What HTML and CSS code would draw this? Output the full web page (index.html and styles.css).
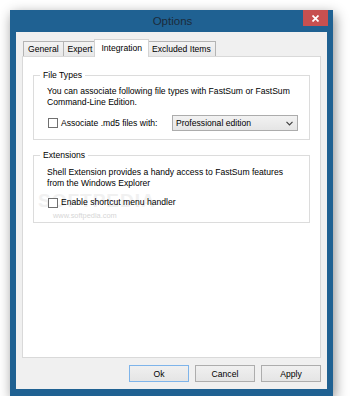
FILE: index.html
```html
<!DOCTYPE html>
<html lang="en">
<head>
  <meta charset="UTF-8" />
  <title>Options</title>
  <link rel="stylesheet" href="styles.css">
</head>
<body>
  <div class="window">
    <div class="titlebar">
      <span class="title">Options</span>
      <button class="close-btn" aria-label="Close">
        <svg width="7" height="7" viewBox="0 0 7 7"><path d="M0.5 0.5 L6.5 6.5 M6.5 0.5 L0.5 6.5" stroke="#fff" stroke-width="1.7" fill="none" /></svg>
      </button>
    </div>

    <div class="client">
      <div class="tabs">
        <div class="tab">General</div>
        <div class="tab">Expert</div>
        <div class="tab active">Integration</div>
        <div class="tab">Excluded Items</div>
      </div>

      <div class="panel">
        <section class="group">
          <span class="group-title">File Types</span>
          <p class="group-text">You can associate following file types with FastSum or FastSum Command-Line Edition.</p>
          <div class="row">
            <label class="check"><span class="box"></span>Associate .md5 files with:</label>
            <div class="select">
              <span>Professional edition</span>
              <svg width="7" height="5" viewBox="0 0 7 5"><path d="M0.5 0.8 L3.5 3.8 L6.5 0.8" stroke="#404040" stroke-width="1.2" fill="none" /></svg>
            </div>
          </div>
        </section>

        <section class="group group-ext">
          <span class="group-title">Extensions</span>
          <p class="group-text">Shell Extension provides a handy access to FastSum features from the Windows Explorer</p>
          <div class="row">
            <label class="check"><span class="box"></span>Enable shortcut menu handler</label>
          </div>
        </section>

        <div class="watermark">
          <span class="wm-big">SOFTPEDIA</span>
          <span class="wm-url">www.softpedia.com</span>
        </div>
      </div>

      <div class="buttons">
        <button class="btn default">Ok</button>
        <button class="btn">Cancel</button>
        <button class="btn">Apply</button>
      </div>
    </div>
  </div>
</body>
</html>
```

FILE: styles.css
```css
body {
  margin: 0;
  background: #ffffff;
  font-family: "Liberation Sans", Arial, sans-serif;
  font-size: 8.6px;
  color: #000000;
}
.window {
  width: 323px;
  height: 386px;
  margin: 10px 0 0 10px;
  box-sizing: border-box;
  background: #1f6192;
  padding: 0 6px 7px;
  display: flex;
  flex-direction: column;
  box-shadow: 2px 4px 12px rgba(0, 0, 0, 0.45);
}
.titlebar {
  height: 22px;
  display: flex;
  align-items: flex-start;
  padding-left: 26px;
}
.title {
  flex: 1;
  text-align: center;
  line-height: 22px;
  font-size: 11.5px;
  color: #1b2b3b;
}
.close-btn {
  width: 25px;
  height: 16px;
  margin-right: -1px;
  background: #c75050;
  border: 0;
  padding: 0;
  display: flex;
  align-items: center;
  justify-content: center;
}
.client {
  flex: 1;
  background: #f0f0f0;
  padding: 7px 6px 7px;
  display: flex;
  flex-direction: column;
}
.tabs {
  display: flex;
  align-items: flex-end;
  height: 17px;
  padding-left: 1px;
  position: relative;
  z-index: 1;
}
.tab {
  height: 15px;
  box-sizing: border-box;
  border: 1px solid #b4b4b4;
  border-bottom: 0;
  padding: 0 4px;
  line-height: 14px;
  background: linear-gradient(#f3f3f3, #e8e8e8);
  margin-right: -1px;
}
.tab.active {
  height: 18px;
  margin: 0 -2px -1px -2px;
  padding: 0 6px;
  line-height: 16px;
  background: #ffffff;
  border-color: #d3d3d3;
  position: relative;
  z-index: 1;
}
.panel {
  flex: 1;
  background: #ffffff;
  border: 1px solid #d9d9d9;
  padding: 18px 10px 0;
  position: relative;
}
.group {
  border: 1px solid #dcdcdc;
  padding: 0 11px 8px 13px;
  display: flex;
  flex-direction: column;
}
.group-ext {
  margin-top: 15px;
  padding-bottom: 13px;
}
.group-title {
  align-self: flex-start;
  margin: -6px 0 0 -7px;
  padding: 0 3px;
  background: #ffffff;
  line-height: 11px;
  position: relative;
  z-index: 1;
}
.group-text {
  margin: 5px 0 0;
  line-height: 11px;
}
.group-ext .group-text {
  margin-top: 6px;
}
.row {
  display: flex;
  align-items: center;
  margin-top: 7px;
  position: relative;
  z-index: 1;
}
.check {
  display: flex;
  align-items: center;
  line-height: 13px;
}
.box {
  width: 10px;
  height: 10px;
  box-sizing: border-box;
  border: 1px solid #707070;
  background: #ffffff;
  margin: 0 3px 0 1px;
}
.select {
  margin-left: auto;
  width: 126px;
  height: 16px;
  box-sizing: border-box;
  border: 1px solid #acacac;
  background: linear-gradient(#f2f2f2, #e5e5e5);
  display: flex;
  align-items: center;
  justify-content: space-between;
  padding: 0 4px 0 3px;
}
.watermark {
  position: absolute;
  left: 15px;
  top: 134px;
  display: flex;
  flex-direction: column;
}
.wm-big {
  font-size: 19px;
  font-weight: bold;
  letter-spacing: 1px;
  color: #f1f1f1;
  line-height: 20px;
}
.wm-url {
  margin-left: 15px;
  font-size: 7.4px;
  color: #d6d6d6;
  line-height: 9px;
}
.buttons {
  display: flex;
  justify-content: flex-end;
  gap: 6px;
  margin-top: 7px;
}
.btn {
  width: 60px;
  height: 17px;
  border: 1px solid #adadad;
  background: linear-gradient(#f0f0f0, #e5e5e5);
  font-family: "Liberation Sans", Arial, sans-serif;
  font-size: 8.6px;
  color: #000000;
  padding: 0;
}
.btn.default {
  border-color: #7eb4ea;
}
```
